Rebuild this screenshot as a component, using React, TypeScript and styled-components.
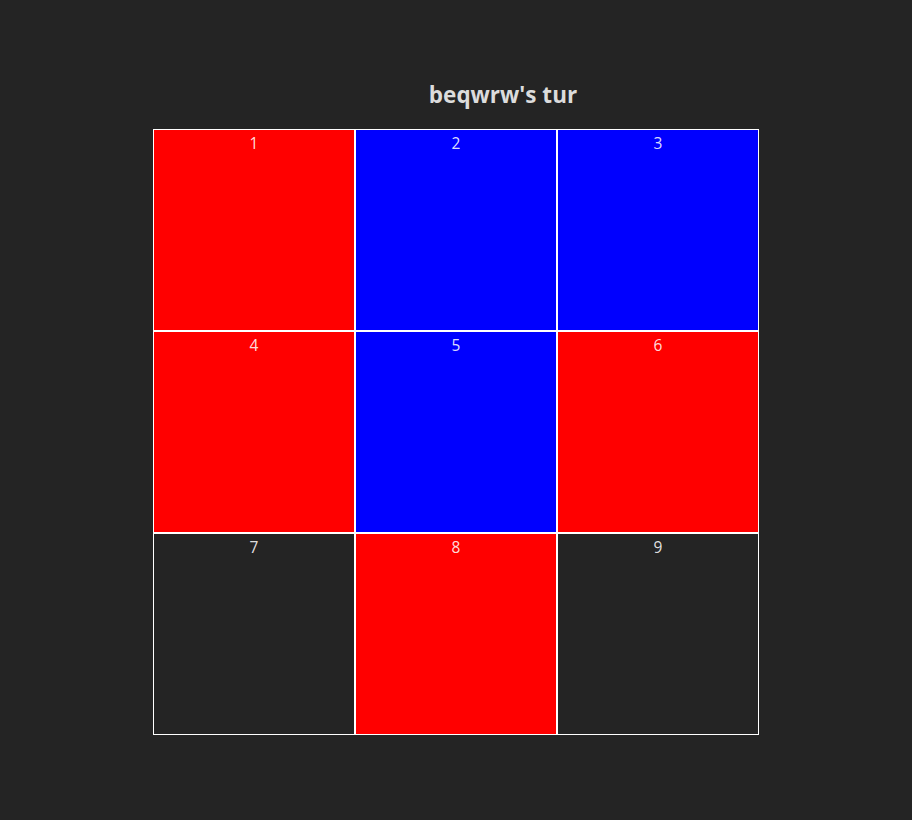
import React from "react";
import styled, { createGlobalStyle } from "styled-components";

const Global = createGlobalStyle`
  html, body { margin: 0; padding: 0; background: #242424; }
  body {
    font-family: "Open Sans", "Noto Sans", sans-serif;
    color: rgba(255, 255, 255, 0.87);
    min-height: 100vh;
  }
`;

const Page = styled.div`
  display: flex;
  flex-direction: column;
  align-items: center;
  padding-top: 79px;
`;

const Title = styled.h2`
  margin: 0 0 18px 0;
  padding-left: 94px;
  font-size: 22.5px;
  font-weight: 700;
  line-height: 32px;
  color: #dcdcdc;
`;

const Board = styled.div`
  display: grid;
  grid-template-columns: repeat(3, 202px);
  grid-template-rows: repeat(3, 202px);
`;

const Cell = styled.div<{ $fill: string }>`
  box-sizing: border-box;
  border: 1px solid #ffffff;
  background: ${(p) => p.$fill};
  color: rgba(255, 255, 255, 0.87);
  font-size: 15.5px;
  line-height: 20px;
  text-align: center;
  padding-top: 3px;
`;

const colors: Record<string, string> = {
  r: "#ff0000",
  b: "#0000ff",
  e: "transparent",
};

const cells = ["r", "b", "b", "r", "b", "r", "e", "r", "e"];

export default function App() {
  return (
    <>
      <Global />
      <Page>
        <Title>beqwrw's tur</Title>
        <Board>
          {cells.map((c, i) => (
            <Cell key={i} $fill={colors[c]}>
              {i + 1}
            </Cell>
          ))}
        </Board>
      </Page>
    </>
  );
}
